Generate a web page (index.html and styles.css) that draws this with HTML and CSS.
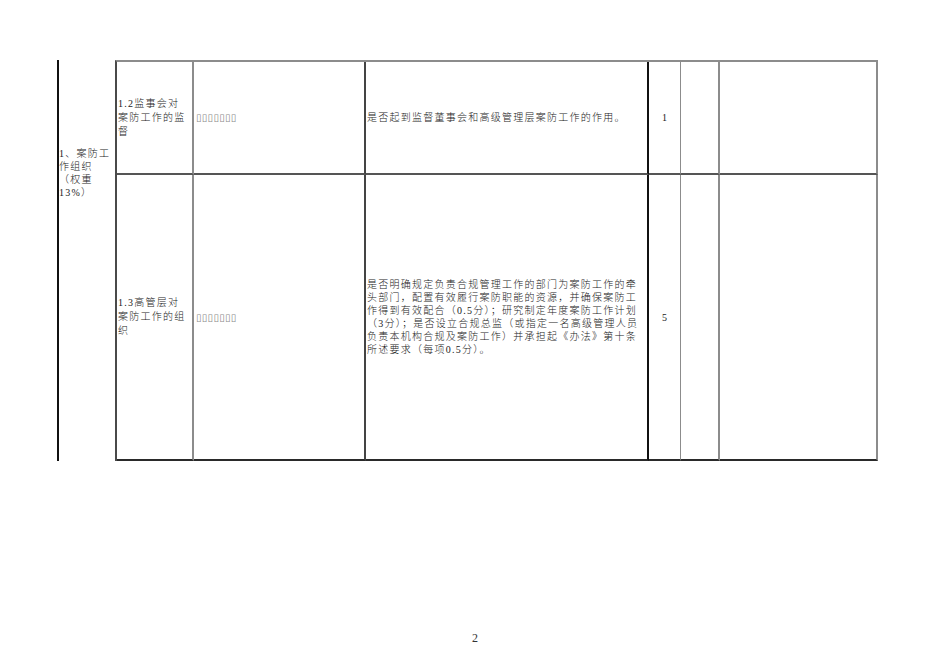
FILE: index.html
```html
<!DOCTYPE html>
<html lang="zh">
<head>
<meta charset="utf-8">
<title>案防工作评分表</title>
<link rel="stylesheet" href="styles.css">
</head>
<body>
<div class="page">
  <div class="sheet">
    <div class="group">
      <div class="group-text">1、案防工<br>作组织<br>（权重<br>13%）</div>
    </div>
    <div class="grid">
      <div class="cell c1 r1"><div class="item">1.2监事会对<br>案防工作的监<br>督</div></div>
      <div class="cell c2 r1"><span class="tofu">▯▯▯▯▯▯▯</span></div>
      <div class="cell c3 r1"><div class="desc">是否起到监督董事会和高级管理层案防工作的作用。</div></div>
      <div class="cell c4 r1"><span class="score">1</span></div>
      <div class="cell c5 r1"></div>
      <div class="cell c6 r1"></div>

      <div class="cell c1 r2"><div class="item">1.3高管层对<br>案防工作的组<br>织</div></div>
      <div class="cell c2 r2"><span class="tofu">▯▯▯▯▯▯▯</span></div>
      <div class="cell c3 r2"><div class="desc">是否明确规定负责合规管理工作的部门为案防工作的牵<br>头部门，配置有效履行案防职能的资源，并确保案防工<br>作得到有效配合（0.5分）；研究制定年度案防工作计划<br>（3分）；是否设立合规总监（或指定一名高级管理人员<br>负责本机构合规及案防工作）并承担起《办法》第十条<br>所述要求（每项0.5分）。</div></div>
      <div class="cell c4 r2"><span class="score">5</span></div>
      <div class="cell c5 r2"></div>
      <div class="cell c6 r2"></div>
    </div>
  </div>
  <div class="pageno">2</div>
</div>
</body>
</html>
```

FILE: styles.css
```css
html, body {
  margin: 0;
  padding: 0;
  background: #ffffff;
}

body {
  font-family: "Liberation Serif", "Noto Sans CJK SC", serif;
  color: #1a1a1a;
}

.page {
  width: 950px;
  height: 672px;
  padding-top: 60px;
  box-sizing: border-box;
}

.sheet {
  display: flex;
  margin-left: 57px;
}

.group {
  width: 58px;
  height: 401px;
  border-left: 2px solid #111111;
  box-sizing: border-box;
  padding-top: 87px;
  padding-left: 0;
}

.group-text,
.item,
.desc {
  font-size: 10px;
  letter-spacing: 1.25px;
  font-weight: 300;
  white-space: nowrap;
}

.group-text {
  line-height: 13px;
}

.grid {
  display: grid;
  grid-template-columns: 77px 172px 283px 32px 39px 158px;
  grid-template-rows: 113px 286px;
  border-top: 2px solid #8c8c8c;
  border-left: 2px solid #4a4a4a;
}

.cell {
  box-sizing: border-box;
  display: flex;
  align-items: center;
  border-right: 2px solid #8c8c8c;
  border-bottom: 2px solid #555555;
}

.r2 {
  border-bottom-color: #2a2a2a;
}

.c1 {
  padding-left: 1px;
}

.c2 {
  padding-left: 2px;
  border-right-color: #444444;
}

.c3 {
  padding-left: 1px;
  border-right-color: #111111;
}

.c4 {
  justify-content: center;
  border-right-color: #8c8c8c;
  border-right-width: 1px;
}

.c5 {
  border-right-color: #8c8c8c;
}

.c6 {
  border-right-color: #8c8c8c;
}

.item {
  line-height: 14px;
}

.desc {
  line-height: 13px;
}

.tofu {
  font-family: "DejaVu Sans", sans-serif;
  font-size: 10px;
  color: #8a8a8a;
  letter-spacing: 0.3px;
}

.score {
  font-size: 10px;
  font-weight: 300;
}

.pageno {
  margin-top: 170px;
  text-align: center;
  font-size: 12px;
  color: #333333;
}
```
